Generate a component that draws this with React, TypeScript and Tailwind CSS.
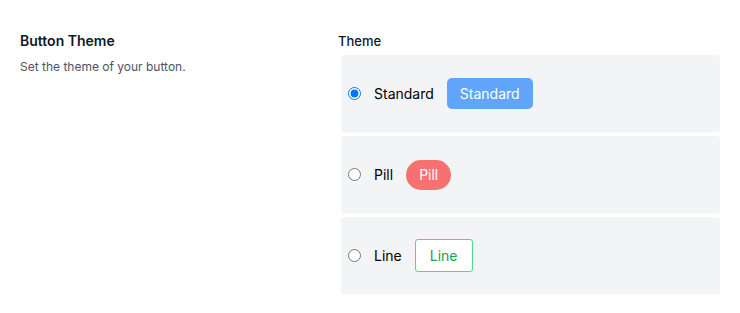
import { useState } from 'react';

const themes = [
  { id: 'standard', label: 'Standard', btn: 'h-[31px] px-[13px] rounded-[5px] bg-[#60a5fa] text-white' },
  { id: 'pill', label: 'Pill', btn: 'h-[30px] px-[13px] rounded-full bg-[#f87171] text-white' },
  { id: 'line', label: 'Line', btn: 'h-[33px] px-[14px] rounded-[3px] border border-[#4ade80] bg-white text-[#16a34a]' },
];

export default function App() {
  const [theme, setTheme] = useState('standard');

  return (
    <div className="w-[740px] h-[313px] bg-white flex px-5 pt-[31px] font-['Inter',sans-serif]">
      <div className="w-[318px] shrink-0">
        <h2 className="text-[14px] font-semibold text-[#111827] leading-5">Button Theme</h2>
        <p className="mt-[6px] text-[12px] text-[#4b5563] leading-5">Set the theme of your button.</p>
      </div>
      <div className="w-[384px]">
        <div className="text-[13px] font-medium text-[#111827] leading-5">Theme</div>
        <div className="mt-[4px] ml-[3px] flex flex-col gap-[4px]">
          {themes.map((t) => (
            <label
              key={t.id}
              className="h-[77px] flex items-center pl-[7px] rounded-[4px] bg-[#f3f4f6] shadow-[0_1px_1px_rgba(0,0,0,0.03)] cursor-pointer"
            >
              <input
                type="radio"
                name="theme"
                checked={theme === t.id}
                onChange={() => setTheme(t.id)}
                className="w-[13px] h-[13px] m-0"
              />
              <span className="ml-[13px] text-[14px] text-black">{t.label}</span>
              <span className={`ml-[13px] inline-flex items-center text-[14px] ${t.btn}`}>{t.label}</span>
            </label>
          ))}
        </div>
      </div>
    </div>
  );
}
